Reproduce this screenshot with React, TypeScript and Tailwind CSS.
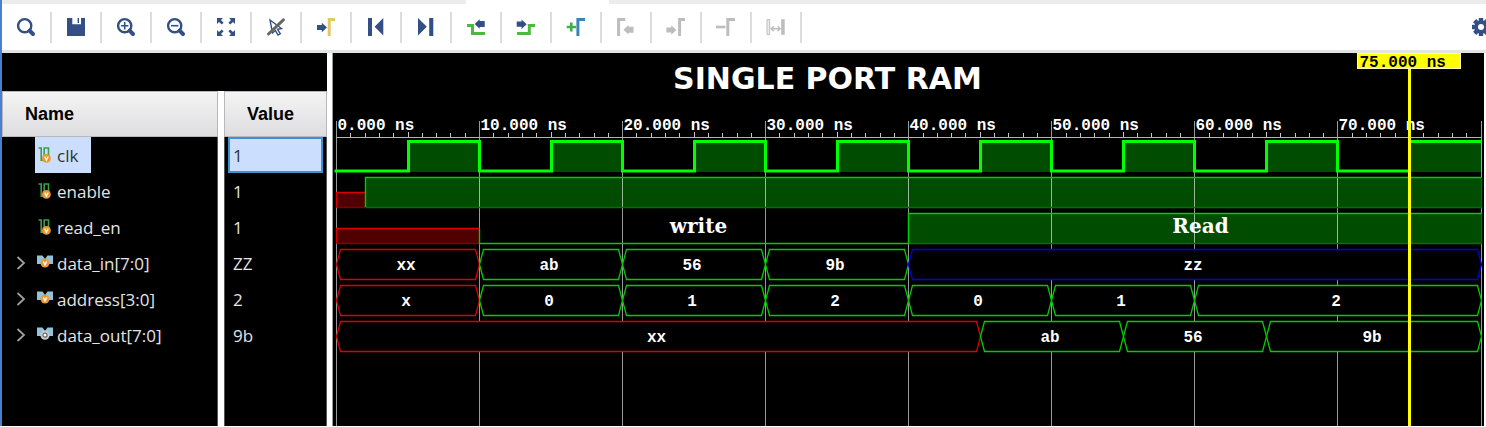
import { useLayoutEffect, useRef, useState } from "react";
import type { ReactNode } from "react";

const NAVY = "#334f86";
const GREEN = "#4aba3c";
const MUTED = "#bdbdbd";

function Icon({ children }: { children: ReactNode }) {
  return (
    <svg width="20" height="20" viewBox="0 0 20 20" fill="none" aria-hidden="true">
      {children}
    </svg>
  );
}

const lens = (
  <>
    <circle cx="8.7" cy="8.7" r="6.6" stroke={NAVY} strokeWidth="2.4" />
    <path d="M13.6 13.6L17 17" stroke={NAVY} strokeWidth="4" strokeLinecap="round" />
  </>
);

const Right = ({ x, y, c = NAVY }: { x: number; y: number; c?: string }) => (
  <path d="M0 -2.6H4.8V-4.8L10 0L4.8 4.8V2.6H0Z" transform={`translate(${x} ${y})`} fill={c} />
);
const Left = ({ x, y, c = NAVY }: { x: number; y: number; c?: string }) => (
  <path d="M10 -3H5V-4.8L0 0L5 4.8V3H10Z" transform={`translate(${x} ${y})`} fill={c} />
);
const Edge = ({ x, end, c }: { x: number; end: number; c: string }) => (
  <path d={`M${x} 19V2.5H${end}`} stroke={c} strokeWidth="3" />
);

const corner = "M1 1H7L5 3L7.6 5.8L5.8 7.6L3 5L1 7Z";

const tools: { label: string; off?: boolean; art: ReactNode }[] = [
  { label: "Search", art: lens },
  {
    label: "Save",
    art: (
      <>
        <path d="M1 1H19V19H1Z" fill={NAVY} />
        <path d="M6.3 1H11.6V7.2H6.3ZM13 1H15V7.2H11.6V6H13Z" fill="#fff" />
      </>
    ),
  },
  { label: "Zoom in", art: <>{lens}<path d="M5 8.7H12.4M8.7 5V12.4" stroke={NAVY} strokeWidth="1.6" /></> },
  { label: "Zoom out", art: <>{lens}<path d="M5 8.7H12.4" stroke={NAVY} strokeWidth="1.6" /></> },
  {
    label: "Zoom fit",
    art: (
      <g fill={NAVY}>
        <path d={corner} />
        <path d={corner} transform="translate(20 0) scale(-1 1)" />
        <path d={corner} transform="translate(0 20) scale(1 -1)" />
        <path d={corner} transform="translate(20 20) scale(-1 -1)" />
      </g>
    ),
  },
  {
    label: "Select tool",
    art: (
      <>
        <path d="M4 3L15.5 11.5L11.5 12.3L14.3 16.8L12 18L9.4 13.5L6.5 16Z" stroke={NAVY} strokeWidth="1.4" />
        <path d="M2.5 17L17.4 2.8" stroke="#666" strokeWidth="3" strokeLinecap="round" />
      </>
    ),
  },
  { label: "Go to cursor", art: <><Right x={1} y={10.5} /><Edge x={13.2} end={19} c="#e3c765" /></> },
  { label: "Go to time 0", art: <path d="M2 1H6V19H2ZM17.3 1V18.6L8.6 9.8Z" fill={NAVY} /> },
  { label: "Go to last time", art: <path d="M13.2 1H17.3V19H13.2ZM2 1V18.6L10.8 9.8Z" fill={NAVY} /> },
  {
    label: "Previous transition",
    art: <><path d="M1 8.5H6.5V16.4H19" stroke={GREEN} strokeWidth="3" /><Left x={8.7} y={7} /></>,
  },
  {
    label: "Next transition",
    art: <><path d="M1 16.4H13.3V8.5H19" stroke={GREEN} strokeWidth="3" /><Right x={0.7} y={7.2} /></>,
  },
  {
    label: "Add marker",
    art: <><path d="M0.7 10H10M5.3 5.4V14.6" stroke="#3faf4c" strokeWidth="2.6" /><Edge x={11.9} end={19} c="#3a84b5" /></>,
  },
  { label: "Previous marker", off: true, art: <><Edge x={2.6} end={9.3} c={MUTED} /><Left x={7.5} y={12.7} c={MUTED} /></> },
  { label: "Next marker", off: true, art: <><Right x={0.4} y={13} c={MUTED} /><Edge x={13.6} end={19} c={MUTED} /></> },
  { label: "Delete marker", off: true, art: <><path d="M0 10H9.5" stroke={MUTED} strokeWidth="2.6" /><Edge x={11.8} end={19} c={MUTED} /></> },
  {
    label: "Swap cursors",
    off: true,
    art: (
      <>
        <path d="M1 2.6H3.7V17.4H1Z" stroke={MUTED} fill="#ececec" />
        <path d="M15.2 2.2H18.7V17.8H15.2Z" fill={MUTED} />
        <path d="M5.4 11.7H14M7.8 9.2L5.2 11.7L7.8 14.2M11.6 9.2L14.2 11.7L11.6 14.2" stroke={MUTED} strokeWidth="1.4" />
      </>
    ),
  },
];

function Gear() {
  return (
    <svg width="20" height="20" viewBox="-10 -10 20 20" className="shrink-0" aria-hidden="true">
      {[0, 45, 90, 135].map((a) => (
        <rect key={a} x="-2.2" y="-9" width="4.4" height="18" fill={NAVY} transform={`rotate(${a})`} />
      ))}
      <circle r="6.8" fill={NAVY} />
      <circle r="3" fill="#fff" />
    </svg>
  );
}

function SignalIcon({ kind }: { kind: "wire" | "bus" | "out" }) {
  return (
    <svg width="17" height="18" viewBox="0 0 17 18" fill="none" className="shrink-0" aria-hidden="true">
      {kind === "wire" ? (
        <path d="M1.5 1H4.2V13.3H7.2V1H11.5V9" stroke="#37a04c" strokeWidth="1.6" />
      ) : (
        <path d="M0 0.5H5.5L8 4L10.5 0.5H16V9H12L8 6L4 9H0Z" fill="#93c2db" />
      )}
      {kind === "out" ? (
        <>
          <circle cx="8" cy="8.2" r="4.6" fill="#c9c9c9" />
          <circle cx="8" cy="8.2" r="2" fill="#fff" stroke="#666" strokeWidth="1.2" />
        </>
      ) : (
        <g transform={kind === "wire" ? "translate(9.4 11.4)" : "translate(8 8.2)"}>
          <circle r="4.4" fill="#f0962d" />
          <path d="M-1.7 -1.8L0 1.8L1.7 -1.8" stroke="#fff" strokeWidth="1.3" />
        </g>
      )}
    </svg>
  );
}

const signals: { name: string; value: string; kind: "wire" | "bus" | "out" }[] = [
  { name: "clk", value: "1", kind: "wire" },
  { name: "enable", value: "1", kind: "wire" },
  { name: "read_en", value: "1", kind: "wire" },
  { name: "data_in[7:0]", value: "ZZ", kind: "bus" },
  { name: "address[3:0]", value: "2", kind: "bus" },
  { name: "data_out[7:0]", value: "9b", kind: "out" },
];

const headCell =
  "h-[46px] border border-[#b8b8bc] bg-linear-to-b from-[#f4f4f4] to-[#dedee0] p-0 text-left font-['Liberation_Sans',sans-serif] text-lg font-bold text-black";

function SignalTable() {
  return (
    <table className="w-[325px] shrink-0 table-fixed border-separate border-spacing-0 bg-black font-['Open_Sans',sans-serif] text-[17px] leading-6 text-[#e4e4e4]">
      <colgroup>
        <col className="w-[216px]" />
        <col className="w-[6px]" />
        <col />
      </colgroup>
      <thead>
        <tr>
          <td colSpan={3} className="h-[38px] p-0" />
        </tr>
        <tr>
          <th className={headCell}><span className="pl-[22px]">Name</span></th>
          <td className="bg-white p-0" />
          <th className={headCell}><span className="pl-[22px]">Value</span></th>
        </tr>
      </thead>
      <tbody>
        {signals.map((s, i) => (
          <tr key={s.name} className="h-9">
            <td className="border-r border-[#555] p-0">
              <div className="flex h-9 items-center">
                <span className="flex w-[33px] pl-[14px]">
                  {s.kind !== "wire" && (
                    <button type="button" aria-label={`Expand ${s.name}`} className="block">
                      <svg width="10" height="14" viewBox="0 0 10 14" fill="none">
                        <path d="M1.5 1L8 7L1.5 13" stroke="#a0a0a0" strokeWidth="1.8" />
                      </svg>
                    </button>
                  )}
                </span>
                <span
                  className={
                    i === 0
                      ? "flex h-9 items-center gap-[3px] bg-[#cbdefe] pt-0.5 pr-[13px] pl-0.5 text-[#333]"
                      : "flex h-9 items-center gap-[3px] pt-0.5 pl-0.5"
                  }
                >
                  <SignalIcon kind={s.kind} />
                  {s.name}
                </span>
              </div>
            </td>
            <td className="bg-white p-0" />
            <td className="border-x border-[#555] p-0">
              <div
                className={
                  i === 0
                    ? "mx-[3px] flex h-9 items-center border-2 border-[#3c93d4] bg-[#cbdefe] px-[3px] pt-0.5 text-[#333]"
                    : "mx-[3px] flex h-9 items-center px-[5px] pt-0.5"
                }
              >
                {s.value}
              </div>
            </td>
          </tr>
        ))}
        <tr>
          <td className="border-r border-[#555] p-0" />
          <td className="bg-white p-0" />
          <td className="border-x border-[#555] p-0" />
        </tr>
      </tbody>
    </table>
  );
}

const END = 80;
const CURSOR = 75;
const HEIGHT = 373;

type Segment = { from: number; to: number; text: string; color: string };
const G = "#00cc00";
const R = "#dc0000";
const B = "#0000e0";

const buses: { mid: number; segments: Segment[] }[] = [
  {
    mid: 211,
    segments: [
      { from: 0, to: 10, text: "xx", color: R },
      { from: 10, to: 20, text: "ab", color: G },
      { from: 20, to: 30, text: "56", color: G },
      { from: 30, to: 40, text: "9b", color: G },
      { from: 40, to: 80, text: "zz", color: B },
    ],
  },
  {
    mid: 247,
    segments: [
      { from: 0, to: 10, text: "x", color: R },
      { from: 10, to: 20, text: "0", color: G },
      { from: 20, to: 30, text: "1", color: G },
      { from: 30, to: 40, text: "2", color: G },
      { from: 40, to: 50, text: "0", color: G },
      { from: 50, to: 60, text: "1", color: G },
      { from: 60, to: 80, text: "2", color: G },
    ],
  },
  {
    mid: 283,
    segments: [
      { from: 0, to: 45, text: "xx", color: R },
      { from: 45, to: 55, text: "ab", color: G },
      { from: 55, to: 65, text: "56", color: G },
      { from: 65, to: 80, text: "9b", color: G },
    ],
  },
];

const mono = "font-['Liberation_Mono',monospace] text-base font-bold";
const serif = "font-['DejaVu_Serif',serif] text-xl font-bold";

function Waveform() {
  const box = useRef<HTMLDivElement>(null);
  const [width, setWidth] = useState(1151);

  useLayoutEffect(() => {
    const el = box.current;
    if (!el) return;
    const measure = () => setWidth(el.clientWidth);
    measure();
    const watcher = new ResizeObserver(measure);
    watcher.observe(el);
    return () => watcher.disconnect();
  }, []);

  const x = (t: number) => Math.round(3 + (t * (width - 6.5)) / END) + 0.5;
  const tens = [0, 10, 20, 30, 40, 50, 60, 70, 80];
  const ticks = Array.from({ length: END }, (_, i) => i).filter((t) => t % 10 !== 0);
  const clock = tens
    .slice(0, 8)
    .map((t) => `H${x(t + 5)}V88.5H${x(t + 10)}${t < 70 ? "V118" : ""}`)
    .join("");

  return (
    <div ref={box} className="min-w-0 flex-1 overflow-hidden bg-black">
      <svg width={width} height={HEIGHT} className="block" role="img" aria-label="Waveform">
        <g fill="#004c00">
          {tens.slice(0, 8).map((t) => (
            <rect key={t} x={x(t + 5)} y="88" width={x(t + 10) - x(t + 5)} height="31" />
          ))}
          <rect x={x(2)} y="124" width={x(80) - x(2)} height="31" />
          <rect x={x(40)} y="160" width={x(80) - x(40)} height="31" />
        </g>
        <g fill="#500000">
          <rect x={x(0)} y="139" width={x(2) - x(0)} height="16" />
          <rect x={x(0)} y="175" width={x(10) - x(0)} height="16" />
        </g>

        <g stroke="#fff" strokeOpacity="0.6">
          {tens.map((t) => (
            <path key={t} d={`M${x(t)} 68V${HEIGHT}`} />
          ))}
        </g>
        <path d={`M${x(0)} 84.5H${x(80)}`} stroke="#b4b4b4" />
        <g stroke="#c8c8c8">
          {ticks.map((t) => (
            <path key={t} d={`M${x(t)} ${t % 5 ? 80 : 79}V84`} />
          ))}
        </g>

        <g fill="none" strokeWidth="1.4">
          <path d={`M${x(2)} 154.5H${x(80)}V124`} stroke="#007000" />
          <path d={`M${x(40)} 190.5H${x(80)}V160`} stroke="#007000" />
          <path d={`M${x(0)} 154.5V139.5H${x(2)}`} stroke={R} />
          <path d={`M${x(0)} 154.5H${x(2)}`} stroke="#800000" />
          <path d={`M${x(0)} 190.5V175.5H${x(10)}`} stroke={R} />
          <path d={`M${x(0)} 190.5H${x(10)}`} stroke="#800000" />
          <path d={`M${x(2)} 154V124.5H${x(80)}`} stroke="#00cc00" />
          <path d={`M${x(10)} 176V190.5H${x(40)}V160.5H${x(80)}`} stroke="#00cc00" />
          <path d={`M${x(0) - 2} 118${clock}`} stroke="#00ff00" strokeWidth="3" />
        </g>

        {buses.map(({ mid, segments }) =>
          segments.map((s) => {
            const a = x(s.from);
            const b = x(s.to);
            const top = mid - 14.5;
            const bottom = mid + 15.5;
            return (
              <g key={`${mid}-${s.from}`}>
                <path
                  d={`M${a} ${mid + 0.5}L${a + 4} ${top}H${b - 4}L${b} ${mid + 0.5}L${b - 4} ${bottom}H${a + 4}Z`}
                  fill="#000"
                  stroke={s.color}
                  strokeWidth="1.3"
                />
                <text x={(a + b) / 2 - 2} y={mid + 6} textAnchor="middle" fill="#fff" className={mono}>
                  {s.text}
                </text>
              </g>
            );
          }),
        )}

        <g fill="#fff">
          {tens.slice(0, 8).map((t) => (
            <text key={t} x={x(t) + 1} y="77" className={mono}>
              {`${t}.000 ns`}
            </text>
          ))}
          <text x={x(34.3)} y="36" textAnchor="middle" className="font-['DejaVu_Sans',sans-serif] text-[30px] font-bold">
            SINGLE PORT RAM
          </text>
          <text x={x(25.3)} y="180" textAnchor="middle" className={serif}>write</text>
          <text x={x(60.4)} y="180" textAnchor="middle" className={serif}>Read</text>
        </g>

        <path d={`M${x(CURSOR)} 16V${HEIGHT}`} stroke="#ffff00" strokeWidth="3" />
        <rect x={x(CURSOR) - 52} y="0.5" width="103" height="15" fill="#ffff00" stroke="#fffbb0" />
        <text x={x(CURSOR) - 50} y="14" fill="#000" className={mono}>75.000 ns</text>
      </svg>
    </div>
  );
}

export default function App() {
  return (
    <main className="overflow-hidden border-l-2 border-[#4a7fd0] bg-white">
      <div className="flex h-1">
        <div className="w-[464px] bg-[#ececec]" />
        <div className="w-[143px] bg-white" />
        <div className="flex-1 bg-[#ececec]" />
      </div>
      <div className="flex h-[49px] items-center overflow-hidden border-b-[3px] border-[#e2e4e4]" role="toolbar">
        {tools.map((t) => (
          <button
            key={t.label}
            type="button"
            aria-label={t.label}
            disabled={t.off}
            className="flex h-[31px] w-[50px] shrink-0 items-center justify-center border-r-2 border-[#dcdcdc]"
          >
            <Icon>{t.art}</Icon>
          </button>
        ))}
        <button type="button" aria-label="Settings" className="ml-auto flex w-[15px] shrink-0 overflow-hidden">
          <Gear />
        </button>
      </div>
      <div className="flex">
        <SignalTable />
        <div className="w-[6px] shrink-0 border-r border-[#999]" />
        <Waveform />
        <div className="w-0.5 shrink-0" />
      </div>
    </main>
  );
}
